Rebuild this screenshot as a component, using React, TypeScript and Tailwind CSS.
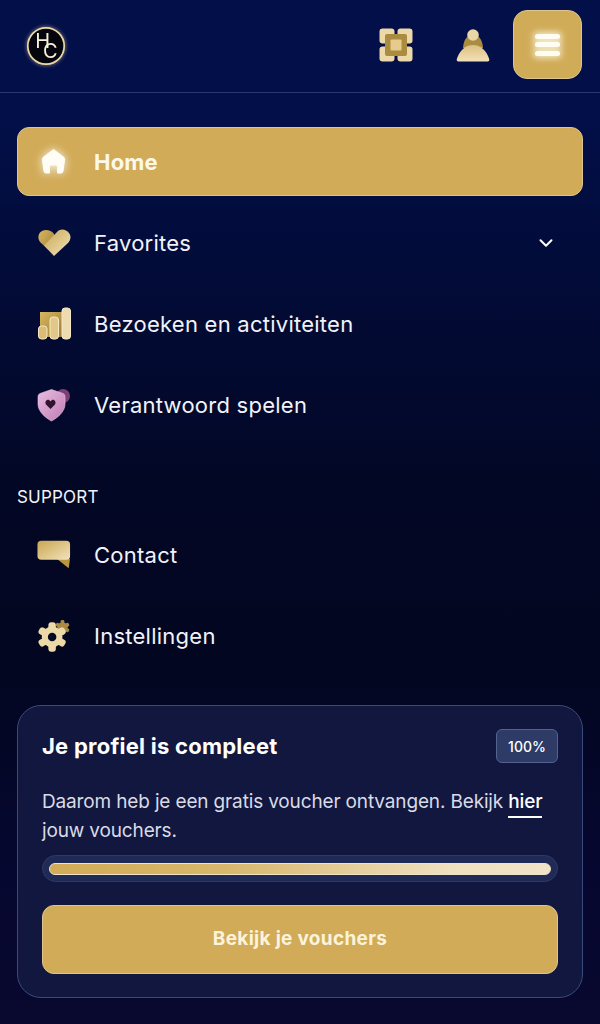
import { ChevronDown } from "lucide-react";
import type { ReactNode } from "react";

const font = { fontFamily: "Inter, 'Noto Sans', sans-serif" };

function Defs() {
  return (
    <svg width="0" height="0" className="absolute">
      <defs>
        <linearGradient id="gold" x1="0" y1="0" x2="1" y2="1">
          <stop offset="0" stopColor="#c9a651" />
          <stop offset="1" stopColor="#f3e3bd" />
        </linearGradient>
        <linearGradient id="goldDark" x1="0" y1="0" x2="1" y2="1">
          <stop offset="0" stopColor="#d9b661" />
          <stop offset="1" stopColor="#9c7f35" />
        </linearGradient>
        <linearGradient id="pale" x1="0" y1="0" x2="0" y2="1">
          <stop offset="0" stopColor="#dcc081" />
          <stop offset="1" stopColor="#f2e1b9" />
        </linearGradient>
        <linearGradient id="pink" x1="0" y1="0" x2="1" y2="1">
          <stop offset="0" stopColor="#e9bde2" />
          <stop offset="1" stopColor="#c07cb2" />
        </linearGradient>
      </defs>
    </svg>
  );
}

function Logo() {
  return (
    <svg width="40" height="40" viewBox="0 0 40 40" className="drop-shadow-[0_0_2px_rgba(236,217,168,0.6)]">
      <circle cx="20" cy="20" r="18.2" fill="#04050d" stroke="#ecd9a8" strokeWidth="1.7" />
      <text x="9.2" y="22" fontSize="20" fontWeight="400" fill="#f7efdb" fontFamily="Inter, sans-serif">
        H
        <tspan x="17" y="32">C</tspan>
      </text>
    </svg>
  );
}

function HomeIcon() {
  return (
    <svg width="34" height="34" viewBox="0 0 34 34" className="drop-shadow-[0_0_5px_rgba(255,255,255,0.9)]">
      <path d="M16.5 4.5 L27 12.5 Q28 13.5 27.5 15 L26 26 Q26 28 24 28 H20.5 V21.5 Q20.5 20 19 20 H14 Q12.5 20 12.5 21.5 V28 H9 Q7 28 7 26 L5.5 15 Q5 13.5 6 12.5 Z" fill="#fffdf6" stroke="#fffdf6" strokeLinejoin="round" />
    </svg>
  );
}

function HeartIcon() {
  return (
    <svg width="34" height="30" viewBox="0 0 34 30">
      <path d="M17 27 L3 14 C-1 8 3 2 9 2 C12 2 15 3 17 6 L17 27 Z" fill="url(#goldDark)" />
      <path d="M7 17.5 L20 4 C24 0 29 1.5 32 5 C34.5 8.5 33.5 12 31 15 L17 28 Z" fill="url(#gold)" />
    </svg>
  );
}

function BarsIcon() {
  return (
    <svg width="34" height="34" viewBox="0 0 34 34">
      <path d="M3 5 H25 V30 H3 Z" fill="url(#goldDark)" />
      <rect x="1.5" y="19" width="8.5" height="13" rx="3" fill="#dcbc72" stroke="#f6e8c6" strokeWidth="1" />
      <rect x="13" y="10" width="8.5" height="22" rx="3" fill="#e2c789" stroke="#f6e8c6" strokeWidth="1" />
      <rect x="25" y="1" width="8.5" height="31" rx="3" fill="#eddcb0" stroke="#f6e8c6" strokeWidth="1" />
    </svg>
  );
}

function ShieldIcon() {
  return (
    <svg width="34" height="34" viewBox="0 0 34 34">
      <circle cx="26" cy="8" r="7" fill="#7c3f78" />
      <path d="M14.5 1.5 L26 5.5 Q28 6.3 28 8.5 V16 C28 24 20 30 14.5 33 C9 30 1 24 1 16 V8.5 Q1 6.3 3 5.5 Z" fill="url(#pink)" stroke="#efc6e6" strokeWidth="0.6" strokeLinejoin="round" />
      <path d="M13.5 21 L9 16.5 C7.2 13.5 10.2 11 12 12 C12.8 12.5 13.2 13 13.5 13.5 C13.8 13 14.2 12.5 15 12 C16.8 11 19.8 13.5 18 16.5 Z" fill="#33122f" />
    </svg>
  );
}

function ChatIcon() {
  return (
    <svg width="36" height="32" viewBox="0 0 36 32">
      <path d="M21 20 L35 20 L33.5 30 Z" fill="#b8953f" />
      <rect x="0.5" y="1" width="34.5" height="20" rx="4" fill="url(#gold)" />
    </svg>
  );
}

function GearShape({ cx, cy, r, fill }: { cx: number; cy: number; r: number; fill: string }) {
  const teeth = [0, 60, 120];
  return (
    <g fill={fill}>
      <circle cx={cx} cy={cy} r={r} />
      {teeth.map((a) => (
        <rect
          key={a}
          x={cx - r * 0.36}
          y={cy - r * 1.42}
          width={r * 0.72}
          height={r * 2.84}
          rx={r * 0.28}
          transform={`rotate(${a} ${cx} ${cy})`}
        />
      ))}
    </g>
  );
}

function GearIcon() {
  return (
    <svg width="36" height="34" viewBox="0 0 36 34">
      <GearShape cx={27} cy={8} r={5.5} fill="#a98a42" />
      <GearShape cx={16} cy={18} r={11} fill="#edd9a8" />
      <circle cx="16" cy="18" r="4.5" fill="#070a24" />
    </svg>
  );
}

function ScanIcon() {
  return (
    <svg width="34" height="34" viewBox="0 0 34 34">
      <rect x="0.5" y="0.5" width="15" height="15" rx="3" fill="#ecd8a8" />
      <rect x="18.5" y="0.5" width="15" height="15" rx="3" fill="#ecd8a8" />
      <rect x="0.5" y="18.5" width="15" height="15" rx="3" fill="#ecd8a8" />
      <rect x="18.5" y="18.5" width="15" height="15" rx="3" fill="#ecd8a8" />
      <rect x="6" y="6" width="22" height="22" rx="2" fill="#a98c3f" />
      <rect x="11.5" y="11.5" width="11" height="11" rx="1" fill="#e5cb8d" />
    </svg>
  );
}

function PersonIcon() {
  return (
    <svg width="34" height="34" viewBox="0 0 34 34">
      <path d="M13 8 H21 C24 9 26.5 13 27 20 H7 C7.5 13 10 9 13 8 Z" fill="#a98c3f" />
      <path d="M2.5 33.5 Q0 33.5 1 30.5 C3.5 23 9 17 17 17 C25 17 30.5 23 33 30.5 Q34 33.5 31.5 33.5 Z" fill="url(#pale)" />
      <circle cx="17" cy="7" r="5.8" fill="#e9d6a8" />
    </svg>
  );
}

function NavRow({ icon, label, active, chevron }: { icon: ReactNode; label: string; active?: boolean; chevron?: boolean }) {
  return (
    <div
      className={
        "flex h-[69px] items-center gap-[23px] rounded-[12px] pr-[26px] " +
        (active ? "border border-[#dcc68e] bg-[#d1ab57] pl-[19px]" : "pl-[20px]")
      }
    >
      <div className="flex w-[34px] shrink-0 items-center justify-center">{icon}</div>
      <span className={"flex-1 text-[22px] leading-none " + (active ? "font-bold tracking-[0.2px] text-[#fdf8ea]" : "font-normal tracking-[0.25px] text-[#f2f3f8]")}>
        {label}
      </span>
      {chevron && <ChevronDown className="h-[22px] w-[22px] text-white" strokeWidth={2.2} />}
    </div>
  );
}

export default function App() {
  return (
    <div
      style={font}
      className="relative h-[1024px] w-[600px] overflow-hidden bg-[linear-gradient(180deg,#020f48_0%,#020f48_12%,#020b35_30%,#020725_48%,#030620_65%,#060730_85%,#09092f_100%)]"
    >
      <Defs />
      <header className="flex h-[93px] items-start border-b border-[#2b3a6e] pl-[26px] pr-[18px]">
        <div className="mt-[26px]">
          <Logo />
        </div>
        <div className="ml-auto flex items-start">
          <div className="mt-[28px]">
            <ScanIcon />
          </div>
          <div className="ml-[43px] mt-[28px]">
            <PersonIcon />
          </div>
          <div className="ml-[23px] mt-[10px] flex h-[69px] w-[69px] flex-col items-center justify-center gap-[3.5px] rounded-[14px] border border-[#dcc68e] bg-[#d1ac58]">
            <span className="h-[5px] w-[25px] rounded-full bg-[#fffdf2] shadow-[0_0_6px_2px_rgba(255,255,240,0.75)]" />
            <span className="h-[5px] w-[25px] rounded-full bg-[#fffdf2] shadow-[0_0_6px_2px_rgba(255,255,240,0.75)]" />
            <span className="h-[5px] w-[25px] rounded-full bg-[#fffdf2] shadow-[0_0_6px_2px_rgba(255,255,240,0.75)]" />
          </div>
        </div>
      </header>

      <nav className="flex flex-col px-[17px] pt-[34px]">
        <div className="flex flex-col gap-[12px]">
          <NavRow active icon={<HomeIcon />} label="Home" />
          <NavRow icon={<HeartIcon />} label="Favorites" chevron />
          <NavRow icon={<BarsIcon />} label="Bezoeken en activiteiten" />
          <NavRow icon={<ShieldIcon />} label="Verantwoord spelen" />
        </div>
        <div className="mb-[13px] mt-[48px] h-[20px] text-[17px] leading-[20px] tracking-[0.2px] text-[#f2f3f8]">SUPPORT</div>
        <div className="flex flex-col gap-[12px]">
          <NavRow icon={<ChatIcon />} label="Contact" />
          <NavRow icon={<GearIcon />} label="Instellingen" />
        </div>

        <section className="mt-[35px] h-[293px] rounded-[24px] border border-[#3a4a7c] bg-[#12173f] px-[24px] pt-[23px]">
          <div className="flex items-center justify-between">
            <h2 className="text-[22px] font-bold leading-none tracking-[0.24px] text-white">Je profiel is compleet</h2>
            <div className="flex h-[34px] w-[62px] items-center justify-center rounded-[6px] border border-[#54648f] bg-[#2d3b66] text-[14px] font-medium text-white">
              100%
            </div>
          </div>
          <p className="mt-[24px] text-[19px] leading-[29px] tracking-[-0.15px] text-[#d9dbe6]">
            Daarom heb je een gratis voucher ontvangen. Bekijk{" "}
            <span className="border-b-2 border-white pb-[3px] font-medium text-white">hier</span> jouw vouchers.
          </p>
          <div className="mt-[10px] flex h-[27px] items-center rounded-full border border-[#2c3a68] bg-[#1f2a56] px-[6px]">
            <div className="h-[12px] w-full rounded-full border border-[#f0e3c8] bg-[linear-gradient(90deg,#d1ab57_0%,#d8b76c_35%,#efe0c0_80%,#f0e3c8_100%)]" />
          </div>
          <button className="mt-[23px] flex h-[69px] w-full items-center justify-center rounded-[12px] border border-[#dcc68e] bg-[#d1ab57] text-[19px] font-bold tracking-[0.3px] text-[#fbf3dc]">
            Bekijk je vouchers
          </button>
        </section>
      </nav>
    </div>
  );
}
